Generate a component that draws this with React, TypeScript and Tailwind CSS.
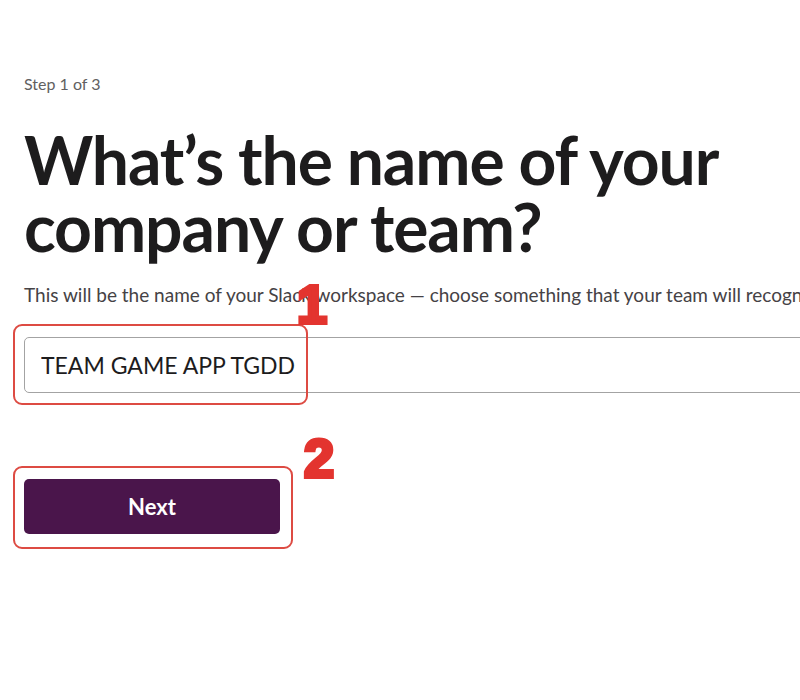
import { useState } from "react";

// red numbered callout drawn on top of the screenshot
function Callout({ label, className }: { label: string; className: string }) {
  return (
    <span
      className={`pointer-events-none absolute font-['Liberation_Sans',Arial,sans-serif] text-[54px] font-bold leading-none text-[#e3342f] [-webkit-text-stroke:4px_#e3342f] select-none ${className}`}
    >
      {label}
    </span>
  );
}

export default function App() {
  const [name, setName] = useState("TEAM GAME APP TGDD");

  return (
    <div className="h-[700px] w-[800px] overflow-hidden bg-white font-['Lato','Noto_Sans',sans-serif] text-[#1d1c1d]">
      <main className="flex flex-col items-start pl-6 pt-[74px]">
        <p className="text-[16px] leading-[20px] text-[#616061]">Step 1 of 3</p>

        <h1 className="mt-[32px] w-[760px] text-[66px] font-bold leading-[67px] tracking-[-1.1px] text-[#1d1c1d]">
          What’s the name of your company or team?
        </h1>

        <p className="mt-[23px] whitespace-nowrap text-[19px] leading-[24px] text-[#454245]">
          This will be the name of your Slack workspace — choose something that your team will recognize.
        </p>

        <div className="relative mt-[30px] w-[1000px]">
          <input
            value={name}
            onChange={(e) => setName(e.target.value)}
            className="h-[56px] w-full rounded-l-[5px] border border-[#a3a3a3] px-4 font-['Lato','Noto_Sans',sans-serif] text-[23px] text-[#1d1c1d] outline-none"
          />
          <div className="pointer-events-none absolute left-[-11px] top-[-13px] h-[81px] w-[295px] rounded-[9px] border-2 border-[#dd4b43]">
            <Callout label="1" className="left-[282px] top-[-49px]" />
          </div>
        </div>

        <div className="relative mt-[86px]">
          <button className="h-[55px] w-[256px] rounded-[5px] bg-[#4a154b] text-[22px] font-bold text-white">
            Next
          </button>
          <div className="pointer-events-none absolute left-[-11px] top-[-13px] h-[83px] w-[280px] rounded-[9px] border-2 border-[#dd4b43]">
            <Callout label="2" className="left-[289px] top-[-37px]" />
          </div>
        </div>
      </main>
    </div>
  );
}
